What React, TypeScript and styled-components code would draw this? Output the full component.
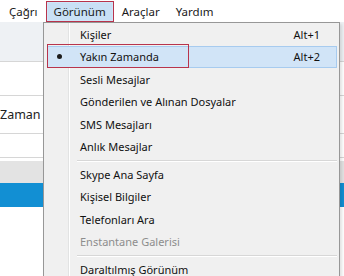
import React from "react";
import styled, { createGlobalStyle } from "styled-components";

const GlobalStyle = createGlobalStyle`
  html, body { margin: 0; padding: 0; background: #ffffff; }
  body { font-family: "Noto Sans", "Segoe UI", sans-serif; overflow: hidden; }
`;

const Page = styled.div`
  position: relative;
  width: 344px;
  height: 276px;
  overflow: hidden;
  background: #ffffff;
  font-family: "Noto Sans", sans-serif;
  font-size: 11px;
  color: #111;
`;

const MenuBar = styled.div`
  display: flex;
  align-items: stretch;
  height: 22px;
  padding-left: 1px;
  background: #ffffff;
  font-size: 11.5px;
`;

const BarItem = styled.div<{ $active?: boolean }>`
  display: flex;
  align-items: center;
  padding: 0 7px;
  margin-top: 1px;
  border: 1px solid ${(p) => (p.$active ? "#b8344c" : "transparent")};
  box-shadow: ${(p) => (p.$active ? "inset 0 0 0 1px #d0e6f8" : "none")};
  background: ${(p) => (p.$active ? "#c9e0f5" : "transparent")};
  color: #1a1a1a;
`;

const Content = styled.div`
  display: flex;
  flex-direction: column;
`;

const Band = styled.div<{ $h: number; $bg: string; $line?: boolean }>`
  height: ${(p) => p.$h}px;
  background: ${(p) => p.$bg};
  border-bottom: ${(p) => (p.$line ? "1px solid #d6d6d6" : "none")};
  display: flex;
  align-items: center;
  font-size: 12.5px;
  color: #222;
`;

const Dropdown = styled.div`
  position: absolute;
  left: 43px;
  top: 22px;
  width: 297px;
  height: 262px;
  background: #f0f0f0;
  border: 1px solid #979797;
  box-shadow: 2px 2px 3px rgba(0, 0, 0, 0.12);
  display: flex;
  flex-direction: column;
  padding: 0 0 0 3px;
  box-sizing: border-box;
`;

const Gutter = styled.div`
  position: absolute;
  left: 24px;
  top: 0;
  bottom: 0;
  width: 1px;
  background: #e2e3e3;
  border-right: 1px solid #ffffff;
`;

const Item = styled.div<{ $selected?: boolean; $disabled?: boolean }>`
  position: relative;
  display: flex;
  align-items: center;
  height: 22.5px;
  box-sizing: border-box;
  margin-right: 2px;
  padding-left: 32px;
  padding-right: 16px;
  border: 1px solid ${(p) => (p.$selected ? "#a7cbef" : "transparent")};
  background: ${(p) => (p.$selected ? "#d1e4f7" : "transparent")};
  color: ${(p) => (p.$disabled ? "#8d8d8d" : "#111")};
`;

const Label = styled.span`
  flex: 1;
  white-space: nowrap;
`;

const Shortcut = styled.span`
  white-space: nowrap;
`;

const Bullet = styled.span`
  position: absolute;
  left: 9px;
  top: 50%;
  width: 5px;
  height: 5px;
  margin-top: -2.5px;
  border-radius: 50%;
  background: #1c1c1c;
`;

const Separator = styled.div`
  height: 5px;
  display: flex;
  align-items: center;
  padding-left: 30px;
  margin-right: 2px;
  &::after {
    content: "";
    flex: 1;
    height: 1px;
    background: #d7d7d7;
    border-bottom: 1px solid #ffffff;
  }
`;

const Annotation = styled.div`
  position: absolute;
  left: 47px;
  top: 44px;
  width: 140px;
  height: 22px;
  border: 1.5px solid #b8344c;
  pointer-events: none;
`;

type Entry =
  | { kind: "item"; label: string; shortcut?: string; selected?: boolean; disabled?: boolean }
  | { kind: "sep" };

const entries: Entry[] = [
  { kind: "item", label: "Kişiler", shortcut: "Alt+1" },
  { kind: "item", label: "Yakın Zamanda", shortcut: "Alt+2", selected: true },
  { kind: "item", label: "Sesli Mesajlar" },
  { kind: "item", label: "Gönderilen ve Alınan Dosyalar" },
  { kind: "item", label: "SMS Mesajları" },
  { kind: "item", label: "Anlık Mesajlar" },
  { kind: "sep" },
  { kind: "item", label: "Skype Ana Sayfa" },
  { kind: "item", label: "Kişisel Bilgiler" },
  { kind: "item", label: "Telefonları Ara" },
  { kind: "item", label: "Enstantane Galerisi", disabled: true },
  { kind: "sep" },
  { kind: "item", label: "Daraltılmış Görünüm" },
];

export default function App() {
  return (
    <Page>
      <GlobalStyle />
      <MenuBar>
        <BarItem>Çağrı</BarItem>
        <BarItem $active>Görünüm</BarItem>
        <BarItem>Araçlar</BarItem>
        <BarItem>Yardım</BarItem>
      </MenuBar>
      <Content>
        <Band $h={39} $bg="#eef1f4" $line />
        <Band $h={33} $bg="#ffffff" $line />
        <Band $h={37} $bg="#ffffff" $line>Zaman</Band>
        <Band $h={23} $bg="#ffffff" $line />
        <Band $h={3} $bg="#ffffff" />
        <Band $h={22} $bg="#e3e3e3" />
        <Band $h={24} $bg="#128fd3" />
        <Band $h={70} $bg="#ffffff" />
      </Content>
      <Dropdown>
        <Gutter />
        {entries.map((e, i) =>
          e.kind === "sep" ? (
            <Separator key={i} />
          ) : (
            <Item key={i} $selected={e.selected} $disabled={e.disabled}>
              {e.selected && <Bullet />}
              <Label>{e.label}</Label>
              {e.shortcut && <Shortcut>{e.shortcut}</Shortcut>}
            </Item>
          )
        )}
      </Dropdown>
      <Annotation />
    </Page>
  );
}
